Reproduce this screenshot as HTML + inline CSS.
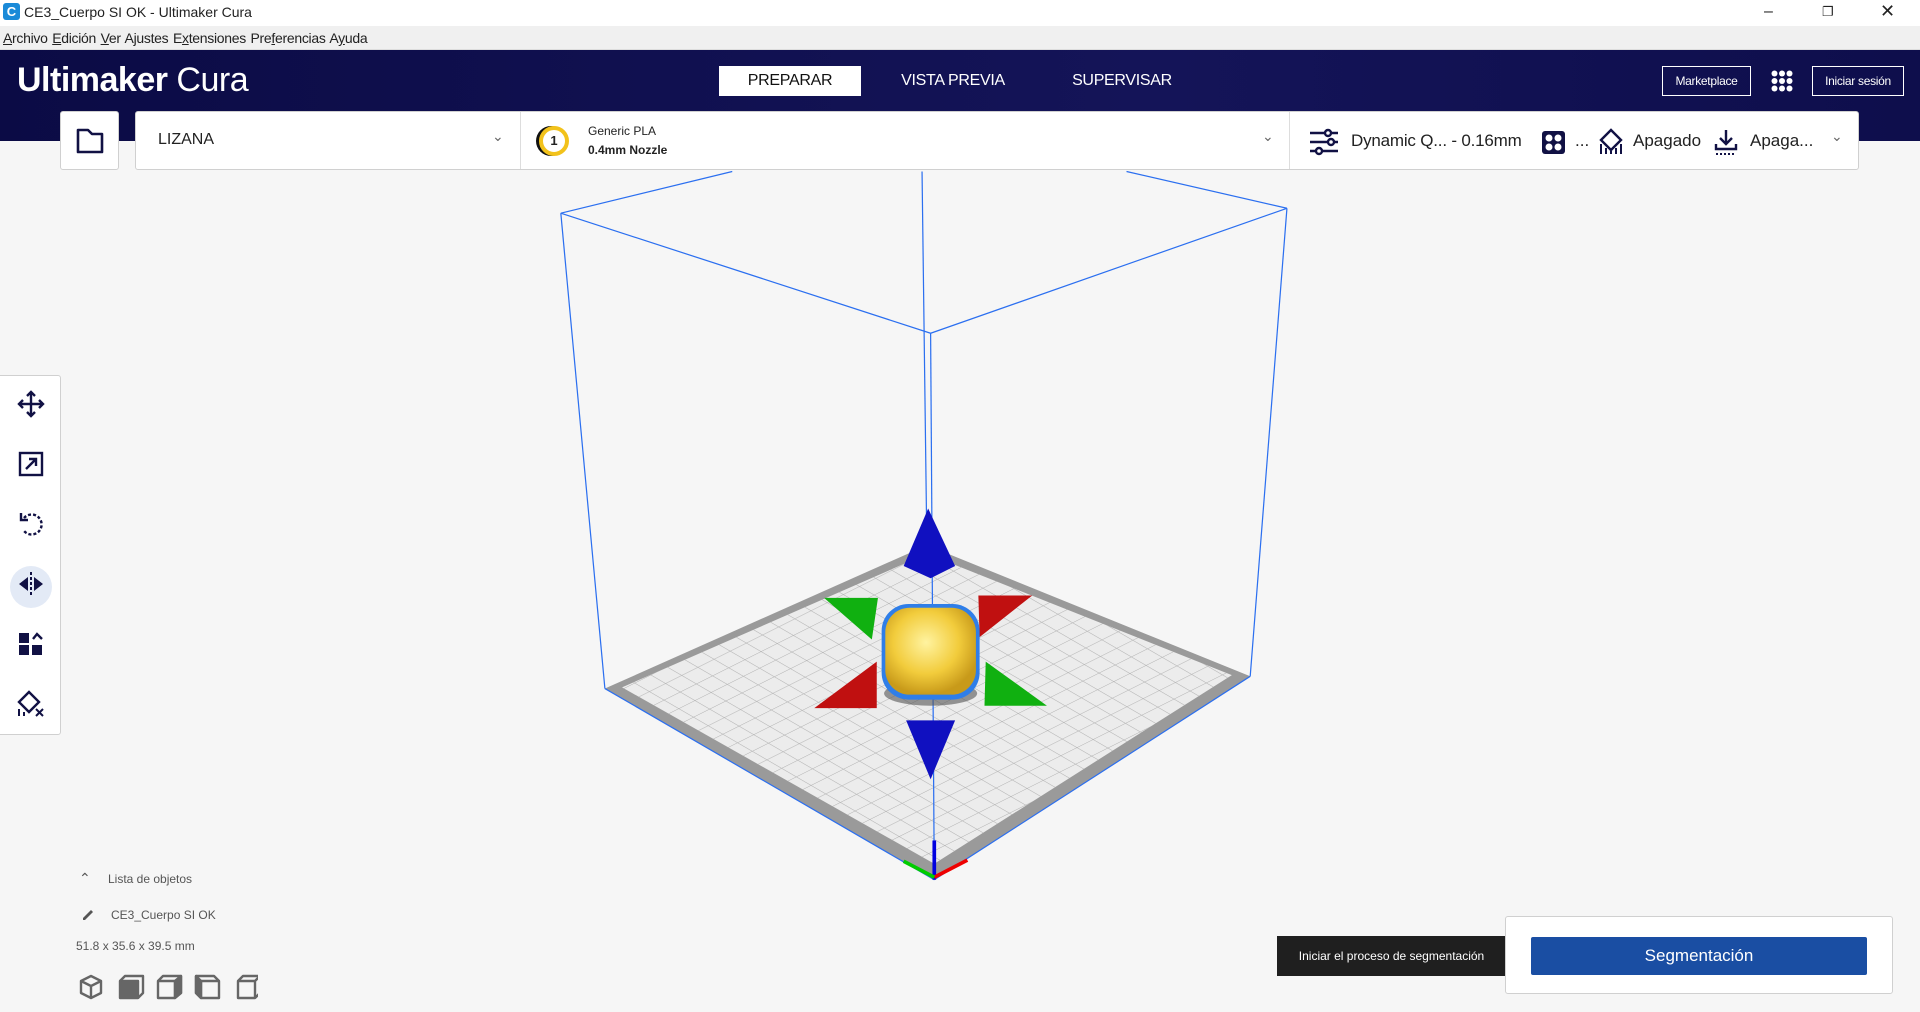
<!DOCTYPE html>
<html><head><meta charset="utf-8"><style>
*{margin:0;padding:0;box-sizing:border-box}
body{width:1920px;height:1012px;overflow:hidden;background:#f6f6f6;font-family:"Liberation Sans",sans-serif;position:relative;color:#222}
.a{position:absolute}
#title{top:0;left:0;width:1920px;height:26px;background:#fff;font-size:14px;line-height:24px}
#menu{top:26px;left:0;width:1920px;height:24px;background:#f0f0f0;font-size:14px;line-height:24px;padding-left:3px;word-spacing:1px;letter-spacing:-0.3px;border-bottom:1px solid #ddd}
#menu u{text-decoration:underline}
#hdr{top:50px;left:0;width:1920px;height:91px;background:linear-gradient(90deg,#0b0b45,#141458 60%,#0e0e4c)}
.tab{top:66px;height:30px;line-height:30px;font-size:16px;color:#fff;text-align:center;letter-spacing:-0.3px}
.ob{border:1px solid #fff;color:#fff;font-size:12px;text-align:center;line-height:28px;height:30px;top:66px;letter-spacing:-0.3px}
.bar{background:#fff;border:1px solid #d0d0d0;border-radius:3px}
.tool{left:16px;width:30px;height:30px}
.sm{font-size:12px;color:#555}
</style></head><body>
<div id="title" class="a"><span style="display:inline-block;width:17px;height:17px;background:#1a8ad8;border-radius:3px;color:#fff;font-weight:bold;font-size:13px;line-height:17px;text-align:center;margin:3px 4px 0 3px;vertical-align:top">C</span>CE3_Cuerpo SI OK - Ultimaker Cura
<span class="a" style="left:1764px;top:0;font-size:16px">&#8211;</span>
<span class="a" style="left:1822px;top:0;font-size:13px">&#10064;</span>
<span class="a" style="left:1880px;top:-1px;font-size:18px">&#10005;</span></div>
<div id="menu" class="a"><u>A</u>rchivo <u>E</u>dición <u>V</u>er A<u>j</u>ustes E<u>x</u>tensiones Pre<u>f</u>erencias A<u>y</u>uda</div>
<div id="hdr" class="a"></div>
<div class="a" style="left:17px;top:58px;font-size:34px;color:#fff;line-height:44px;letter-spacing:-0.5px"><span style="font-weight:600">Ultimaker</span> <span style="font-weight:300">Cura</span></div>
<div class="a tab" style="left:719px;width:142px;background:#fff;color:#111">PREPARAR</div>
<div class="a tab" style="left:883px;width:140px">VISTA PREVIA</div>
<div class="a tab" style="left:1052px;width:140px">SUPERVISAR</div>
<div class="a ob" style="left:1662px;width:89px">Marketplace</div>
<svg class="a" style="left:1771px;top:70px" width="22" height="22"><g fill="#fff"><circle cx="3.5" cy="3.5" r="3"/><circle cx="11" cy="3.5" r="3"/><circle cx="18.5" cy="3.5" r="3"/><circle cx="3.5" cy="11" r="3"/><circle cx="11" cy="11" r="3"/><circle cx="18.5" cy="11" r="3"/><circle cx="3.5" cy="18.5" r="3"/><circle cx="11" cy="18.5" r="3"/><circle cx="18.5" cy="18.5" r="3"/></g></svg>
<div class="a ob" style="left:1812px;width:92px">Iniciar sesión</div>

<svg class="a" style="left:0;top:0" width="1920" height="1012" viewBox="0 0 1568 826" preserveAspectRatio="none">
<defs><pattern id="g" width="12" height="12" patternUnits="userSpaceOnUse" patternTransform="matrix(1,0.58,-1.1,0.55,0,0)"><path d="M0 0H12M0 0V12" stroke="#b0b0b0" stroke-width="0.8" fill="none"/></pattern>
<radialGradient id="y" cx="0.45" cy="0.4" r="0.6"><stop offset="0" stop-color="#fff3a0"/><stop offset="0.6" stop-color="#f2cc3c"/><stop offset="1" stop-color="#c89a1a"/></radialGradient></defs>
<polygon points="494,562 757,445 1021,552 763,718" fill="#9a9a9a"/>
<polygon points="508,561 757,452 1006,551 763,705" fill="#ececec"/>
<polygon points="508,561 757,452 1006,551 763,705" fill="url(#g)"/>
<g stroke="#2b6ff0" stroke-width="1" fill="none">
<line x1="458" y1="174" x2="598" y2="140"/><line x1="920" y1="140" x2="1051" y2="170"/>
<line x1="458" y1="174" x2="760" y2="272"/><line x1="760" y1="272" x2="1051" y2="170"/>
<line x1="458" y1="174" x2="494" y2="562"/><line x1="760" y1="272" x2="763" y2="718"/>
<line x1="1051" y1="170" x2="1021" y2="552"/><line x1="753" y1="140" x2="757" y2="450"/>
<line x1="494" y1="562" x2="763" y2="718"/><line x1="763" y1="718" x2="1021" y2="552"/>
</g>
<line x1="763" y1="686" x2="763" y2="718" stroke="#0000e0" stroke-width="3"/>
<line x1="763" y1="716" x2="790" y2="702" stroke="#e00" stroke-width="3"/>
<line x1="763" y1="716" x2="738" y2="703" stroke="#0c0" stroke-width="3"/>
<polygon points="758,415 738,462 760,472 780,462" fill="#1010c0"/>
<polygon points="740,588 780,588 760,636" fill="#1010c0"/>
<polygon points="673,488 717,488 712,522" fill="#10b010"/>
<polygon points="805,540 855,576 804,576" fill="#10b010"/>
<polygon points="799,486 843,486 800,520" fill="#c01010"/>
<polygon points="716,540 716,578 665,578" fill="#c01010"/>
<ellipse cx="760" cy="566" rx="38" ry="10" fill="#555" opacity="0.6"/>
<rect x="720" y="493" width="80" height="78" rx="22" fill="#2f7ee8"/>
<rect x="723" y="496" width="74" height="71" rx="20" fill="url(#y)"/>
</svg>

<div class="a bar" style="left:60px;top:111px;width:59px;height:59px"></div>
<svg class="a" style="left:75px;top:127px" width="30" height="28"><path d="M3 3H13L17 7H27V25H3Z" fill="none" stroke="#111144" stroke-width="2.6" stroke-linejoin="round"/></svg>
<div class="a bar" style="left:135px;top:111px;width:1724px;height:59px"></div>
<div class="a" style="left:520px;top:112px;width:1px;height:57px;background:#ddd"></div>
<div class="a" style="left:1289px;top:112px;width:1px;height:57px;background:#ddd"></div>
<div class="a" style="left:158px;top:131px;font-size:16px">LIZANA</div>
<div class="a" style="left:492px;top:128px;font-size:14px;color:#666">&#8964;</div>
<div class="a" style="left:539px;top:126px;width:30px;height:30px;border-radius:50%;border:4px solid #f2c21b;background:#fff;font-size:13px;font-weight:bold;text-align:center;line-height:22px;box-shadow:-3px 0 0 #111">1</div>
<div class="a" style="left:588px;top:124px;font-size:12px">Generic PLA</div>
<div class="a" style="left:588px;top:143px;font-size:12px;font-weight:bold">0.4mm Nozzle</div>
<div class="a" style="left:1262px;top:128px;font-size:14px;color:#666">&#8964;</div>
<svg class="a" style="left:1308px;top:128px" width="32" height="28"><g stroke="#111144" stroke-width="2.4" fill="#fff"><line x1="2" y1="5" x2="30" y2="5"/><line x1="2" y1="14" x2="30" y2="14"/><line x1="2" y1="23" x2="30" y2="23"/><circle cx="20" cy="5" r="3"/><circle cx="23" cy="14" r="3"/><circle cx="11" cy="23" r="3"/></g></svg>
<div class="a" style="left:1351px;top:131px;font-size:17px;letter-spacing:-0.2px">Dynamic Q... - 0.16mm</div>
<svg class="a" style="left:1542px;top:131px" width="23" height="23"><rect width="23" height="23" rx="3" fill="#111144"/><g fill="#fff"><circle cx="7" cy="7" r="3.5"/><circle cx="16" cy="7" r="3.5"/><circle cx="7" cy="16" r="3.5"/><circle cx="16" cy="16" r="3.5"/></g></svg>
<div class="a" style="left:1575px;top:131px;font-size:17px">...</div>
<svg class="a" style="left:1598px;top:128px" width="26" height="28"><path d="M13 2L23 12L13 22L3 12Z" fill="none" stroke="#111144" stroke-width="2.4"/><path d="M3 26V16M8 26V20M13 26V23M18 26V20M23 26V16" stroke="#111144" stroke-width="2"/></svg>
<div class="a" style="left:1633px;top:131px;font-size:17px">Apagado</div>
<svg class="a" style="left:1714px;top:128px" width="24" height="28"><path d="M12 2V15M6 10L12 16L18 10M2 16V21H22V16" fill="none" stroke="#111144" stroke-width="2.4"/><path d="M2 26H22" stroke="#111144" stroke-width="2" stroke-dasharray="2 2"/></svg>
<div class="a" style="left:1750px;top:131px;font-size:17px">Apaga...</div>
<div class="a" style="left:1831px;top:128px;font-size:14px;color:#666">&#8964;</div>

<div class="a bar" style="left:-3px;top:375px;width:64px;height:360px"></div>
<div class="a" style="left:10px;top:566px;width:42px;height:42px;border-radius:50%;background:#e3eaf6"></div>
<svg class="a tool" style="top:389px" viewBox="0 0 30 30"><path d="M15 3V27M3 15H27M11 7L15 3L19 7M11 23L15 27L19 23M7 11L3 15L7 19M23 11L27 15L23 19" fill="none" stroke="#111144" stroke-width="2.4"/></svg>
<svg class="a tool" style="top:449px" viewBox="0 0 30 30"><rect x="4" y="4" width="22" height="22" fill="none" stroke="#111144" stroke-width="2.4"/><path d="M10 20L20 10M13 10H20V17" fill="none" stroke="#111144" stroke-width="2.4"/></svg>
<svg class="a tool" style="top:509px" viewBox="0 0 30 30"><path d="M8 9A10 10 0 1 1 8 22" fill="none" stroke="#111144" stroke-width="2.4" stroke-dasharray="3 2"/><path d="M5 4V11H12" fill="none" stroke="#111144" stroke-width="2.4"/></svg>
<svg class="a tool" style="top:569px" viewBox="0 0 30 30"><path d="M15 3V27" stroke="#111144" stroke-width="2" stroke-dasharray="3 2"/><path d="M12 8L3 15L12 22Z M18 8L27 15L18 22Z" fill="#111144"/></svg>
<svg class="a tool" style="top:629px" viewBox="0 0 30 30"><g fill="#111144"><rect x="3" y="4" width="10" height="10"/><rect x="3" y="16" width="10" height="10"/><rect x="16" y="16" width="10" height="10"/></g><path d="M17 10L21 5L26 10" fill="none" stroke="#111144" stroke-width="2.4"/></svg>
<svg class="a tool" style="top:689px" viewBox="0 0 30 30"><path d="M13 3L23 13L13 23L3 13Z" fill="none" stroke="#111144" stroke-width="2.4"/><path d="M3 27V20M8 27V23M20 20L27 27M27 20L20 27" stroke="#111144" stroke-width="2"/></svg>

<div class="a" style="left:79px;top:870px;font-size:14px;color:#555">&#8963;</div>
<div class="a sm" style="left:108px;top:872px">Lista de objetos</div>
<svg class="a" style="left:78px;top:907px" width="18" height="16"><path d="M2 15H16M5 11L13 3L15 5L7 13H5Z" fill="#555"/></svg>
<div class="a sm" style="left:111px;top:908px">CE3_Cuerpo SI OK</div>
<div class="a sm" style="left:76px;top:939px">51.8 x 35.6 x 39.5 mm</div>
<svg class="a" style="left:78px;top:974px" width="180" height="26"><g fill="none" stroke="#666" stroke-width="2.4" stroke-linejoin="round">
<path d="M13 2L23 7V19L13 24L3 19V7Z M3 7L13 12L23 7 M13 12V24"/>
<path d="M42 7H60V24H42Z" fill="#666"/><path d="M42 7L47 2H65V19L60 24"/>
<path d="M80 7H97V24H80Z M80 7L85 2H103V19L97 24 M97 7L103 2" /><path d="M97 7L103 2V19L97 24Z" fill="#666"/>
<path d="M123 7H141V24H123Z M118 2H136L141 7 M118 2V19L123 24"/><path d="M118 2L123 7V24L118 19Z" fill="#666"/>
<path d="M160 7H177V24H160Z M160 7L165 2H182V19L177 24 M177 7L182 2"/></g></svg>

<div class="a" style="left:1277px;top:936px;width:229px;height:40px;background:#1f1f1f;color:#fff;font-size:12px;line-height:40px;text-align:center">Iniciar el proceso de segmentación</div>
<div class="a" style="left:1505px;top:948px;width:0;height:0;border-top:9px solid transparent;border-bottom:9px solid transparent;border-left:9px solid #1f1f1f"></div>
<div class="a bar" style="left:1505px;top:916px;width:388px;height:78px"></div>
<div class="a" style="left:1531px;top:937px;width:336px;height:38px;background:#1a4ea3;color:#fff;font-size:17px;line-height:38px;text-align:center;border-radius:2px">Segmentación</div>
</body></html>
